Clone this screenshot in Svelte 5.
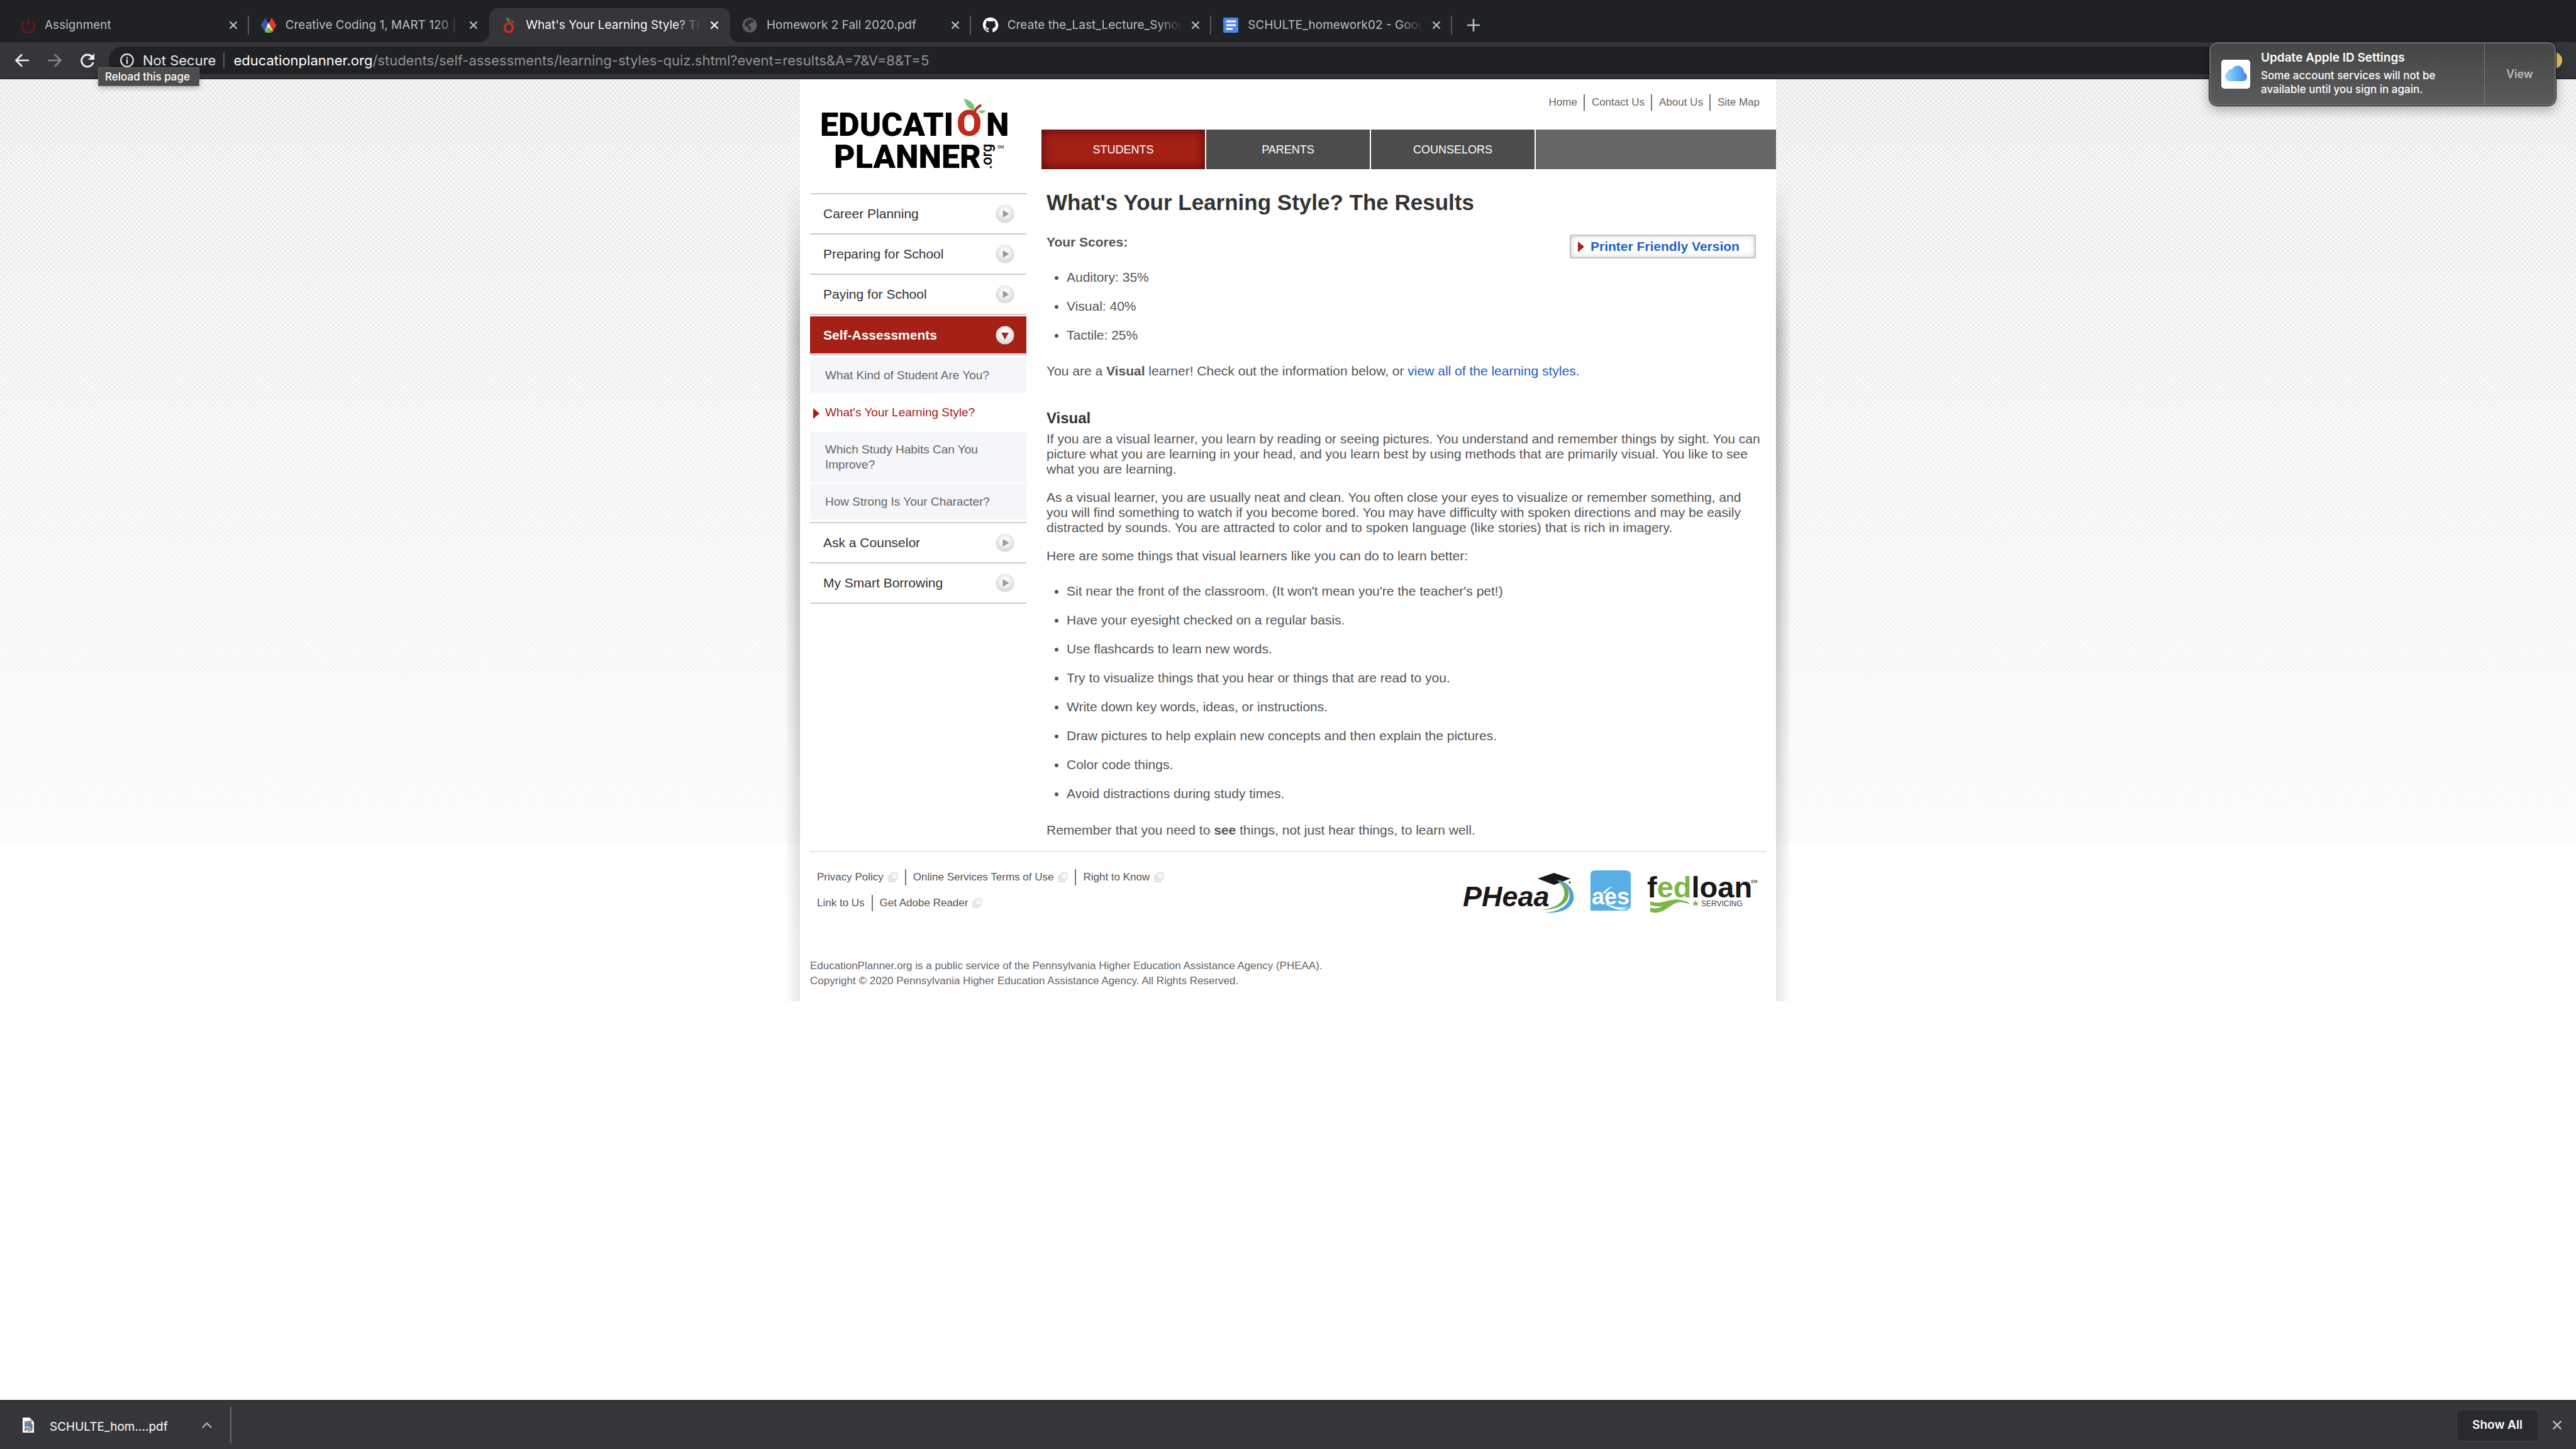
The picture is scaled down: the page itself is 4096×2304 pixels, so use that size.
<script>
  const tabs = [
    { title: 'Assignment', icon: 'power', sep: true },
    { title: 'Creative Coding 1, MART 120 | Fall 2020', icon: 'media' },
    { title: "What's Your Learning Style? The Results", icon: 'apple', active: true },
    { title: 'Homework 2 Fall 2020.pdf', icon: 'globe', sep: true },
    { title: 'Create the_Last_Lecture_Synopsis', icon: 'github', sep: true },
    { title: 'SCHULTE_homework02 - Google Docs', icon: 'docs', sep: true }
  ];
  const topLinks = ['Home', 'Contact Us', 'About Us', 'Site Map'];
  const sections = ['STUDENTS', 'PARENTS', 'COUNSELORS'];
  const menu = [
    { label: 'Career Planning' },
    { label: 'Preparing for School' },
    { label: 'Paying for School' },
    {
      label: 'Self-Assessments',
      open: true,
      items: [
        'What Kind of Student Are You?',
        "What's Your Learning Style?",
        'Which Study Habits Can You Improve?',
        'How Strong Is Your Character?'
      ]
    },
    { label: 'Ask a Counselor' },
    { label: 'My Smart Borrowing' }
  ];
  const current = "What's Your Learning Style?";
  const scores = ['Auditory: 35%', 'Visual: 40%', 'Tactile: 25%'];
  const tips = [
    "Sit near the front of the classroom. (It won't mean you're the teacher's pet!)",
    'Have your eyesight checked on a regular basis.',
    'Use flashcards to learn new words.',
    'Try to visualize things that you hear or things that are read to you.',
    'Write down key words, ideas, or instructions.',
    'Draw pictures to help explain new concepts and then explain the pictures.',
    'Color code things.',
    'Avoid distractions during study times.'
  ];
  const footerRows = [
    [
      { label: 'Privacy Policy', popup: true },
      { label: 'Online Services Terms of Use', popup: true },
      { label: 'Right to Know', popup: true }
    ],
    [{ label: 'Link to Us' }, { label: 'Get Adobe Reader', popup: true }]
  ];
</script>

{#snippet cross(size)}
  <svg class="stroke" width={size} height={size} viewBox="0 0 14 14" aria-hidden="true">
    <path d="M1.5 1.5 12.5 12.5M12.5 1.5 1.5 12.5" stroke-width="2.2" />
  </svg>
{/snippet}

{#snippet favicon(name)}
  <svg class="favicon" width="26" height="26" viewBox="0 0 26 26" aria-hidden="true">
    {#if name === 'power'}
      <path d="M7 6.5A10 10 0 1 0 19 6.5M13 2v11" transform="translate(1 1)" fill="none" stroke="#641820" stroke-width="3.4" />
    {:else if name === 'media'}
      <path d="M8 1 13 11 7 23 0.5 13z" fill="#3d56a6" />
      <path d="M18 1 25.5 13 19.5 23 13 11z" fill="#e3372e" />
      <path d="M13 9 16 15 13 18 10 15z" fill="#fff" />
      <path d="M10 14.5 13 18 10.5 23.500 7 23z" fill="#7cc4e8" />
      <path d="M16 14.500 20 22 18.500 23.500 13 17z" fill="#f6e84a" />
      <path d="M13 17 18.500 25 7.500 25z" fill="#6db650" />
    {:else if name === 'apple'}
      <ellipse cx="13" cy="17" rx="6.500" ry="7" fill="none" stroke="#d92b22" stroke-width="3.200" />
      <path d="M14 9 18 4" stroke="#d92b22" stroke-width="2" />
      <path d="M9 1c3 0 5 3 5 7-3-1-5-4-5-7z" fill="#58a558" />
      <circle cx="19.500" cy="8" r="1.300" fill="#58a558" />
    {:else if name === 'globe'}
      <circle cx="13" cy="13" r="11.500" fill="#5f6063" />
      <path d="M12 4c5-1 8 1 8 4-2 0-4 0-5 2s-4 1-4 3 4 1 4 4-1 4-3 5c-1-2 0-4-1-5s-6-2-6-5 3-7 7-8z" fill="#2b2c2f" />
    {:else if name === 'github'}
      <path
        transform="scale(1.6)"
        fill="#fff"
        d="M8 .5C3.580.5.5 3.800.5 8c0 3.400 2.200 6.200 5.200 7.200.4.100.5-.2.5-.4v-1.300c-2.100.4-2.600-.9-2.600-.9-.3-.9-.9-1.100-.9-1.100-.7-.5.100-.5.100-.5.800.100 1.200.8 1.200.8.700 1.200 1.800.8 2.200.6.100-.5.300-.8.500-1-1.700-.2-3.400-.8-3.400-3.700 0-.8.300-1.500.8-2-.1-.2-.3-1 .1-2 0 0 .6-.2 2.100.8a7 7 0 0 1 3.800 0c1.500-1 2.100-.8 2.100-.8.400 1 .2 1.800.1 2 .5.500.8 1.200.8 2 0 2.900-1.700 3.500-3.400 3.700.3.200.5.700.5 1.400v2c0 .2.100.5.500.4 3-1 5.200-3.800 5.200-7.200C15.500 3.800 12.400.5 8 .5z"
      />
    {:else}
      <rect x="1" y="1" width="24" height="24" rx="2" fill="#4f86ec" />
      <path d="M6 7h15M6 13h15M6 19h10" stroke="#fff" stroke-width="3" />
    {/if}
  </svg>
{/snippet}

{#snippet marker()}
  <svg class="marker" width="10" height="17" viewBox="0 0 10 17" aria-hidden="true"><path d="M0 0 10 8.500 0 17z" fill="#a52117" /></svg>
{/snippet}

<div class="screen">
  <header class="browser">
    <nav class="tabstrip" aria-label="Tabs">
      <div class="tabs">
        {#each tabs as tab}
          <div class="tab" class:active={tab.active} class:sep={tab.sep}>
            {@render favicon(tab.icon)}
            <span class="tab-title">{tab.title}</span>
            <button aria-label="Close tab">{@render cross(14)}</button>
          </div>
        {/each}
      </div>
      <button class="new-tab" aria-label="New tab">
        <svg class="stroke" width="20" height="20" viewBox="0 0 20 20"><path d="M10 0v20M0 10h20" stroke-width="2.600" /></svg>
      </button>
    </nav>

    <div class="toolbar">
      <button class="tool" aria-label="Back">
        <svg class="stroke" width="24" height="24" viewBox="0 0 24 24"><path d="M23 12H3M12 2.500 2.500 12l9.500 9.500" stroke-width="2.600" /></svg>
      </button>
      <button class="tool dim" aria-label="Forward">
        <svg class="stroke" width="24" height="24" viewBox="0 0 24 24"><path d="M1 12h20M12 2.500 21.500 12 12 21.500" stroke-width="2.600" /></svg>
      </button>
      <button class="tool" aria-label="Reload">
        <svg width="24" height="24" viewBox="0 0 24 24"><path d="M19.500 6.500A9.500 9.500 0 1 0 21.300 15" fill="none" stroke="currentColor" stroke-width="2.800" /><path d="M23 1v10H13z" fill="currentColor" /></svg>
      </button>
      <div class="omnibox">
        <svg width="22" height="22" viewBox="0 0 22 22" aria-hidden="true"><circle cx="11" cy="11" r="9.800" fill="none" stroke="#e8eaed" stroke-width="2.200" /><path d="M11 9.500V16.500M11 5.500v2.400" stroke="#e8eaed" stroke-width="2.200" /></svg>
        <span class="security">Not Secure</span>
        <span class="url"><b>educationplanner.org</b>/students/self-assessments/learning-styles-quiz.shtml?event=results&amp;A=7&amp;V=8&amp;T=5</span>
      </div>
      <span class="avatar"></span>
    </div>
    <div class="tooltip" role="tooltip">Reload this page</div>
    <aside class="notice">
      <svg width="46" height="46" viewBox="0 0 46 46" aria-hidden="true">
        <defs>
          <linearGradient id="cloud" x1="0" x2="1"><stop offset="0" stop-color="#a5dcf5" /><stop offset=".5" stop-color="#5fb4f6" /><stop offset="1" stop-color="#4a80ea" /></linearGradient>
        </defs>
        <rect width="46" height="46" rx="5" fill="#fff" />
        <path d="M12 34a8 8 0 0 1-2-14.500 6 6 0 0 1 7-4.500 10 10 0 0 1 19 5 7.500 7.500 0 0 1 0 14z" fill="url(#cloud)" />
      </svg>
      <div class="notice-text">
        <strong>Update Apple ID Settings</strong>
        <p>Some account services will not be available until you sign in again.</p>
      </div>
      <button>View</button>
    </aside>
  </header>

  <div class="page">
    <div class="sheet">
      <div class="masthead">
        <a class="logo" href="#home" aria-label="Education Planner">
          <svg width="320" height="118" viewBox="0 0 320 118">
            <g class="logo-text">
              <text x="14" y="64">EDUCATI</text>
              <text class="red" x="231" y="64">O</text>
              <text x="278" y="64">N</text>
              <text x="36" y="115">PLANNER</text>
              <text class="org" transform="rotate(-90)" x="-117" y="287">.org</text>
              <text class="sm" x="296" y="84">SM</text>
            </g>
            <path d="M243 5c11 2 17 9 17 19-10-2-15-9-17-19z" fill="#7cc47c" />
            <path d="M266 24c6-1 9-1 11 0-3 5-8 6-11 0z" fill="#7cc47c" />
            <path d="M260 26c1-5 5-8 10-11" fill="none" stroke="#bf2a1c" stroke-width="4" />
          </svg>
        </a>
        <div class="masthead-right">
          <ul class="links top-links">
            {#each topLinks as link}<li><a href="#top">{link}</a></li>{/each}
          </ul>
          <nav class="sections" aria-label="Sections">
            {#each sections as s, i}<a href="#section" class:on={i === 0}>{s}</a>{/each}
            <span class="rest"></span>
          </nav>
        </div>
      </div>

      <div class="body">
        <nav class="menu" aria-label="Students">
          <ul>
            {#each menu as entry}
              <li>
                <a class="entry" class:open={entry.open} href="#menu">
                  {entry.label}
                  <svg width="30" height="30" viewBox="0 0 30 30" aria-hidden="true">
                    <defs>
                      <radialGradient id="knob" cy=".4"><stop offset=".4" stop-color="#fafafa" /><stop offset="1" stop-color="#dcdcdc" /></radialGradient>
                    </defs>
                    <circle cx="15" cy="15" r="14.500" fill="url(#knob)" />
                    {#if entry.open}<path d="M9 11h12l-6 11z" fill="#b3241a" />{:else}<path d="M11.500 9v12l10-6z" fill="#9a9a9a" />{/if}
                  </svg>
                </a>
                {#if entry.items}
                  <ul class="sub">
                    {#each entry.items as item}
                      <li>
                        <a href="#item" class:here={item === current}>
                          {#if item === current}{@render marker()}{/if}
                          {item}
                        </a>
                      </li>
                    {/each}
                  </ul>
                {/if}
              </li>
            {/each}
          </ul>
        </nav>

        <main>
          <h1>What's Your Learning Style? The Results</h1>
          <div class="score-head">
            <strong>Your Scores:</strong>
            <a class="printer" href="#print">{@render marker()}Printer Friendly Version</a>
          </div>
          <ul class="scores">
            {#each scores as s}<li>{s}</li>{/each}
          </ul>
          <p class="verdict">You are a <b>Visual</b> learner! Check out the information below, or <a href="#styles">view all of the learning styles</a>.</p>
          <h2>Visual</h2>
          <p>If you are a visual learner, you learn by reading or seeing pictures. You understand and remember things by sight. You can picture what you are learning in your head, and you learn best by using methods that are primarily visual. You like to see what you are learning.</p>
          <p>As a visual learner, you are usually neat and clean. You often close your eyes to visualize or remember something, and you will find something to watch if you become bored. You may have difficulty with spoken directions and may be easily distracted by sounds. You are attracted to color and to spoken language (like stories) that is rich in imagery.</p>
          <p>Here are some things that visual learners like you can do to learn better:</p>
          <ul>
            {#each tips as t}<li>{t}</li>{/each}
          </ul>
          <p class="closing">Remember that you need to <b>see</b> things, not just hear things, to learn well.</p>
        </main>
      </div>

      <footer>
        <div class="foot-row">
          <div class="foot-links">
            {#each footerRows as row}
              <ul class="links">
                {#each row as link}
                  <li>
                    <a href="#footer">{link.label}</a>
                    {#if link.popup}
                      <svg width="16" height="16" viewBox="0 0 16 16" aria-hidden="true"><rect x="1" y="5" width="10" height="10" rx="1" fill="#ececea" stroke="#cfcfcd" /><rect x="5" y="1" width="10" height="10" rx="1" fill="#f8f7f5" stroke="#cfcfcd" /></svg>
                    {/if}
                  </li>
                {/each}
              </ul>
            {/each}
          </div>
          <div class="partners">
            <svg width="178" height="68" viewBox="0 -4 178 68" role="img" aria-label="PHEAA">
              <text class="brand slant" x="1" y="53">PHeaa</text>
              <path d="M120 9 146 0 172 9 146 19z" fill="#1b1718" />
              <path d="M150 11C180 20 178 60 124 59 166 55 172 28 150 11z" fill="#6fae45" />
              <path d="M150 10C190 20 188 68 132 63 178 60 182 24 150 10z" fill="#4a9fe0" />
              <circle cx="171" cy="15" r="1.500" fill="#1b1718" />
            </svg>
            <svg width="64" height="64" viewBox="0 0 64 64" role="img" aria-label="AES">
              <path d="M0 64V6Q0 0 8 0H56Q64 0 64 8V58L58 64z" fill="#59aee6" />
              <text class="brand aes" x="2" y="54">aes</text>
              <path d="M20 36Q26 27 37 25 28 29 23 37zM26 52Q36 62 63 57 38 66 24 53zM34 56Q46 62 62 61 44 66 31 57z" fill="#fff" />
            </svg>
            <svg width="176" height="70" viewBox="0 -5 176 70" role="img" aria-label="FedLoan Servicing">
              <text class="brand" x="0" y="38">f<tspan fill="#7ab648">ed</tspan>loan</text>
              <text class="sm" x="165" y="15">SM</text>
              <text class="servicing" x="86" y="52">SERVICING</text>
              <path d="M5 44C24 52 36 36 58 43Q64 44 69 49 54 43 42 47 22 56 5 50zM5 54C20 60 32 44 52 45 36 48 28 64 10 62L5 61z" fill="#7ab648" />
              <path d="M77 42 78.500 46H82L79.500 48.500 80.500 52 77 50 73.500 52 74.500 48.500 72 46H75.500z" fill="#7ab648" />
            </svg>
          </div>
        </div>
        <p class="legal">EducationPlanner.org is a public service of the Pennsylvania Higher Education Assistance Agency (PHEAA).<br />Copyright © 2020 Pennsylvania Higher Education Assistance Agency. All Rights Reserved.</p>
      </footer>
    </div>
  </div>

  <div class="downloads">
    <button class="file">
      <svg width="20" height="24" viewBox="0 0 20 24" aria-hidden="true">
        <path d="M1 0H12L19 7V24H1z" fill="#fff" /><path d="M12 0V7H19z" fill="#cfd2d6" />
        <path d="M4 6 15 5V9L4 10z" fill="#b08b4f" /><path d="M4 8 15 7 16 14 4 15z" fill="#5f84c8" /><circle cx="14" cy="13" r="3" fill="#6e7680" />
        <text class="pdf" x="4" y="22">PDF</text>
      </svg>
      <span>SCHULTE_hom....pdf</span>
    </button>
    <button class="more" aria-label="Download options">
      <svg class="stroke" width="16" height="10" viewBox="0 0 16 10"><path d="M1 9 8 2l7 7" stroke-width="2.200" /></svg>
    </button>
    <button class="show-all">Show All</button>
    <button class="dismiss" aria-label="Close downloads bar">{@render cross(16)}</button>
  </div>
</div>

<style>
  :global(body) { margin: 0; background: #fff; }
  .screen {
    display: flex; flex-direction: column; min-height: 100vh;
    font-family: "Liberation Sans", Arial, sans-serif; font-size: 21px; line-height: 24px; color: #555;
  }
  ul { list-style: none; margin: 0; padding: 0; }
  p, h1, h2 { margin: 0; }
  a { color: inherit; text-decoration: none; }
  button { font: inherit; color: inherit; background: none; border: 0; padding: 0; display: flex; align-items: center; justify-content: center; }
  svg { display: block; flex: none; }
  .stroke { fill: none; stroke: currentColor; }

  .browser, .downloads { font-family: Inter, Roboto, sans-serif; background: #35363a; }
  .browser { position: relative; z-index: 1; border-bottom: 2px solid #29292b; }
  .tabstrip { display: flex; align-items: flex-end; height: 67px; padding-left: 13px; background: #202124; color: #bdc1c6; font-size: 19px; }
  .tabs { display: grid; grid-template-columns: repeat(6, 1fr); width: 2296px; }
  .tab { position: relative; display: flex; align-items: center; gap: 14px; height: 54px; padding: 0 18px; min-width: 0; }
  .tab-title {
    flex: 1; overflow: hidden; white-space: nowrap;
    mask-image: linear-gradient(to left, transparent, #000 40px);
  }
  .sep::after { content: ""; position: absolute; right: 0; top: 12px; width: 2px; height: 30px; background: #55575b; }
  .active { background: #35363a; color: #fff; border-radius: 14px 14px 0 0; }
  .active::before, .active::after { content: ""; position: absolute; bottom: 0; width: 14px; height: 14px; }
  .active::before { right: 100%; background: radial-gradient(circle at 0 0, transparent 14px, #35363a 14px); }
  .active::after { left: 100%; background: radial-gradient(circle at 100% 0, transparent 14px, #35363a 14px); }
  .new-tab { height: 54px; margin-left: 24px; }

  .toolbar { display: flex; align-items: center; height: 57px; padding: 0 22px 0 23px; color: #f1f3f4; font-size: 22px; }
  .tool { margin-right: 28px; }
  .dim { color: #85868a; }
  .omnibox { display: flex; align-items: center; flex: 1; height: 44px; margin-right: 90px; margin-left: -6px; padding-left: 18px; border-radius: 22px; background: #202124; }
  .security { margin-left: 14px; padding-right: 12px; border-right: 2px solid #5c5e62; color: #e8eaed; }
  .url { margin-left: 14px; color: #8f9297; white-space: nowrap; }
  .url b { font-weight: 400; color: #fff; }
  .avatar { width: 26px; height: 26px; border-radius: 50%; background: #e8c862; }
  .tooltip { position: absolute; left: 156px; top: 107px; padding: 2px 14px 2px 10px; border: 1px solid #6a6a6a; background: #4c4c4c; color: #fff; font-size: 17px; font-weight: 500; box-shadow: 0 3px 8px #0004; }
  .notice {
    position: absolute; right: 32px; top: 67px; display: flex; align-items: center; width: 551px; height: 101px; padding-left: 17px; box-sizing: border-box;
    border: 2px solid #6f6f6f; border-radius: 12px; outline: 1px solid #111; background: linear-gradient(#444545, #5b5b5b); color: #fff; box-shadow: 0 6px 20px #0005;
  }
  .notice-text { flex: 1; padding: 0 30px 2px 17px; font-size: 17px; font-weight: 500; line-height: 22px; }
  .notice-text strong { display: block; margin-bottom: 6px; font-size: 19px; font-weight: 600; }
  .notice button { align-self: stretch; width: 112px; border-left: 1px solid #7c7c7c; color: #c9c9c9; font-size: 18px; font-weight: 500; }

  .page {
    flex: 1;
    background:
      linear-gradient(#fff0, #fff4 400px, #ffffffc8 1215px, #fff 1215px),
      repeating-conic-gradient(#e9e9e9 0 25%, #f7f7f7 0 50%) 0 0 / 8px 8px;
  }
  .sheet { position: relative; box-sizing: border-box; width: 1552px; margin: 0 auto; padding-bottom: 20px; background: #fff; }
  .sheet::before, .sheet::after { content: ""; position: absolute; top: 0; bottom: 0; width: 24px; mask-image: linear-gradient(#0000 160px, #000 400px, #000 600px, #0005 1400px); }
  .sheet::before { right: 100%; background: linear-gradient(to left, #0004, #0000); }
  .sheet::after { left: 100%; background: linear-gradient(to right, #0004, #0000); }

  .masthead, .body { display: grid; grid-template-columns: 384px 1fr; }
  .logo { padding: 26px 0 0 18px; }
  .logo-text { font-family: Roboto, sans-serif; font-size: 52px; font-weight: 900; fill: #000; }
  .logo-text .red { font-size: 58px; fill: #bf2a1c; }
  .logo-text .org { font-size: 23px; font-weight: 500; }
  .sm, .logo-text .sm { font-size: 7px; font-weight: 400; }
  .masthead-right { display: flex; flex-direction: column; justify-content: space-between; height: 143px; }
  .links { display: flex; font-size: 17px; }
  .links li { display: flex; align-items: center; gap: 7px; height: 26px; padding-right: 11px; }
  .links li + li { padding-left: 11px; border-left: 2px solid #777; }
  .top-links { justify-content: flex-end; margin-top: 24px; padding-right: 16px; color: #666; }
  .top-links li { padding-right: 10px; }
  .sections { display: flex; gap: 2px; height: 63px; font-size: 18px; color: #fff; }
  .sections a { display: flex; align-items: center; justify-content: center; width: 260px; background: #4c4c4c; }
  .sections .on { background: #a52117; box-shadow: inset 0 0 18px #4a0a05; }
  .rest { flex: 1; background: #666; }

  .menu { padding: 37px 24px 0 16px; }
  .menu > ul { border-top: 2px solid #ccc; }
  .menu > ul > li { border-bottom: 2px solid #ccc; color: #333; }
  .entry { display: flex; align-items: center; justify-content: space-between; height: 62px; padding: 0 19px 0 21px; }
  .open { height: 59px; margin: 2px 0 1px; background: #a52117; color: #fff; font-weight: 700; }
  .sub { display: grid; gap: 3px; padding: 4px 0; border-top: 2px solid #ccc; font-size: 19px; color: #666; }
  .sub a { position: relative; display: block; padding: 16px 24px; background: #f4f6fa; }
  .sub .here { background: #fff; color: #a52117; }
  .sub .marker { position: absolute; left: 5px; top: 21px; }

  main { padding: 32px 20px 0 8px; }
  h1 { font-size: 35px; line-height: 40px; color: #333; }
  h2 { margin-top: 51px; margin-bottom: 9px; font-size: 24px; line-height: 24px; color: #333; }
  main p + p { margin-top: 21px; }
  main ul { list-style: disc; margin-top: 32px; padding-left: 32px; }
  main li + li { margin-top: 22px; }
  .score-head { display: flex; justify-content: space-between; align-items: flex-start; margin-top: 31px; padding-right: 12px; }
  .printer { display: flex; align-items: center; gap: 10px; box-sizing: border-box; width: 296px; height: 38px; padding-left: 11px; border: 2px solid #c4c4c4; border-radius: 2px; box-shadow: inset 0 0 8px #ccc; color: #2260c8; font-weight: 700; }
  main .scores { margin-top: 18px; }
  .verdict { margin-top: 33px; }
  .verdict a { color: #2260c8; }
  .closing { margin-top: 34px; }

  footer { margin: 21px 16px 0; border-top: 2px solid #e6e6e6; }
  .foot-row { display: flex; justify-content: space-between; padding: 27px 11px 0; }
  .foot-links { display: grid; gap: 15px; align-content: start; }
  .partners { display: flex; gap: 26px; height: 65px; padding: 2px 2px 0 0; }
  .brand { font-size: 47px; font-weight: 700; fill: #1b1718; }
  .slant { font-size: 45px; font-style: italic; }
  .aes { font-size: 36px; fill: #fff; }
  .servicing { font-size: 12px; fill: #444; }
  .legal { margin-top: 75px; font-size: 17px; color: #666; }

  .downloads { display: flex; align-items: center; box-sizing: border-box; height: 78px; padding: 0 22px 0 35px; border-top: 2px solid #29292b; color: #fff; font-size: 19px; }
  .file { gap: 24px; }
  .file span { padding-top: 5px; }
  .more { width: 76px; height: 58px; margin-left: 25px; border-right: 2px solid #66676b; color: #bdbdbd; }
  .show-all { width: 130px; height: 51px; margin-left: auto; margin-right: 22px; border: 1px solid #404145; border-radius: 7px; background: #292a2d; font-weight: 600; }
  .dismiss { color: #bdbdbd; }
  .pdf { font-size: 7px; font-weight: 700; fill: #333; }
</style>
